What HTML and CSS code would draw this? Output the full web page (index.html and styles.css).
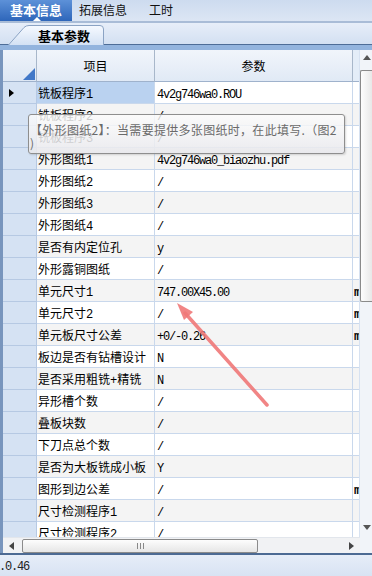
FILE: index.html
```html
<!DOCTYPE html>
<html lang="zh-CN">
<head>
    <meta charset="UTF-8">
    <title>基本信息</title>
    <link rel="stylesheet" href="styles.css">
</head>
<body>
<div class="app">
    <!--顶部页签-->
    <div class="tabbar">
        <div class="tab active">基本信息</div>
        <div class="tab">拓展信息</div>
        <div class="tab tab-last">工时</div>
    </div>
    <!--子页签-->
    <div class="subbar">
        <div class="subtab">
            <svg class="subtab-bg" width="96" height="22" viewBox="0 0 96 22">
                <defs>
                    <linearGradient id="tabfill" x1="0" y1="0" x2="0" y2="1">
                        <stop offset="0" stop-color="#f7faff"/>
                        <stop offset="1" stop-color="#d3e1f4"/>
                    </linearGradient>
                </defs>
                <path d="M0.5,22 L16,4.5 Q18,2.5 21,2.5 L92,2.5 Q95.5,2.5 95.5,6 L95.5,22" fill="url(#tabfill)" stroke="#8ba3c4"/>
            </svg>
            <span class="subtab-text">基本参数</span>
        </div>
    </div>
    <div class="band"></div>

    <!--表格-->
    <div class="gridbox">
        <div class="gridtop">
            <div class="viewport">
                <div class="row head">
                    <div class="rh corner"><span class="corner-mark"></span></div>
                    <div class="item">项目</div>
                    <div class="val">参数</div>
                    <div class="unit"></div>
                </div>
                <div class="row"><div class="rh"><span class="cur"></span></div><div class="item sel">铣板程序1</div><div class="val">4v2g746wa0.ROU</div><div class="unit"></div></div>
                <div class="row odd"><div class="rh"></div><div class="item">铣板程序2</div><div class="val">/</div><div class="unit"></div></div>
                <div class="row"><div class="rh"></div><div class="item">铣板程序3</div><div class="val">/</div><div class="unit"></div></div>
                <div class="row odd"><div class="rh"></div><div class="item">外形图纸1</div><div class="val">4v2g746wa0_biaozhu.pdf</div><div class="unit"></div></div>
                <div class="row"><div class="rh"></div><div class="item">外形图纸2</div><div class="val">/</div><div class="unit"></div></div>
                <div class="row odd"><div class="rh"></div><div class="item">外形图纸3</div><div class="val">/</div><div class="unit"></div></div>
                <div class="row"><div class="rh"></div><div class="item">外形图纸4</div><div class="val">/</div><div class="unit"></div></div>
                <div class="row odd"><div class="rh"></div><div class="item">是否有内定位孔</div><div class="val">y</div><div class="unit"></div></div>
                <div class="row"><div class="rh"></div><div class="item">外形露铜图纸</div><div class="val">/</div><div class="unit"></div></div>
                <div class="row odd"><div class="rh"></div><div class="item">单元尺寸1</div><div class="val">747.00X45.00</div><div class="unit">m</div></div>
                <div class="row"><div class="rh"></div><div class="item">单元尺寸2</div><div class="val">/</div><div class="unit">m</div></div>
                <div class="row odd"><div class="rh"></div><div class="item">单元板尺寸公差</div><div class="val">+0/-0.26</div><div class="unit">m</div></div>
                <div class="row"><div class="rh"></div><div class="item">板边是否有钻槽设计</div><div class="val">N</div><div class="unit"></div></div>
                <div class="row odd"><div class="rh"></div><div class="item">是否采用粗铣+精铣</div><div class="val">N</div><div class="unit"></div></div>
                <div class="row"><div class="rh"></div><div class="item">异形槽个数</div><div class="val">/</div><div class="unit"></div></div>
                <div class="row odd"><div class="rh"></div><div class="item">叠板块数</div><div class="val">/</div><div class="unit"></div></div>
                <div class="row"><div class="rh"></div><div class="item">下刀点总个数</div><div class="val">/</div><div class="unit"></div></div>
                <div class="row odd"><div class="rh"></div><div class="item">是否为大板铣成小板</div><div class="val">Y</div><div class="unit"></div></div>
                <div class="row"><div class="rh"></div><div class="item">图形到边公差</div><div class="val">/</div><div class="unit">m</div></div>
                <div class="row odd"><div class="rh"></div><div class="item">尺寸检测程序1</div><div class="val">/</div><div class="unit"></div></div>
                <div class="row"><div class="rh"></div><div class="item">尺寸检测程序2</div><div class="val">/</div><div class="unit"></div></div>
            </div>
            <!--竖向滚动条-->
            <div class="vscroll">
                <div class="arrow-up"></div>
                <div class="vthumb"></div>
                <div class="vspace"></div>
                <div class="arrow-down"></div>
            </div>
        </div>
        <!--横向滚动条-->
        <div class="hbar">
            <div class="hscroll">
                <div class="hbtn"><span class="arrow-left"></span></div>
                <div class="hthumb"><span class="grip"></span></div>
                <div class="hspace"></div>
                <div class="hbtn"><span class="arrow-right"></span></div>
            </div>
            <div class="hcorner"></div>
        </div>
    </div>

    <div class="status"><span class="ver">1.0.46</span></div>

    <!--提示框-->
    <div class="tooltip">【外形图纸2】：当需要提供多张图纸时，在此填写.（图2<br>)</div>

    <!--标注箭头-->
    <svg class="mark-arrow" width="372" height="576" viewBox="0 0 372 576">
        <line x1="267" y1="405" x2="185" y2="313" stroke="#f07878" stroke-width="3.5" stroke-linecap="round" opacity="0.9"/>
        <polygon points="177,303 193,312 184,320" fill="#f07878" opacity="0.9"/>
    </svg>
</div>
</body>
</html>
```

FILE: styles.css
```css
body{
    margin: 0;
    overflow: hidden;
    font-family: "Noto Sans CJK SC", "Liberation Sans", sans-serif;
    font-size: 12px;
    color: #000;
}
.app{
    position: relative;
    width: 372px;
    height: 576px;
    overflow: hidden;
    background: #dfe8f5;
}
/*顶部页签*/
.tabbar{
    display: flex;
    height: 21px;
    border-bottom: 2px solid #a9bcd7;
    background: linear-gradient(#cddbef, #dce6f4);
}
.tab{
    position: relative;
    padding: 0 7px;
    line-height: 20px;
    font-size: 12px;
    color: #111;
}
.tab.active{
    width: 72px;
    box-sizing: border-box;
    padding: 0;
    text-align: center;
    font-size: 13px;
    font-weight: bold;
    color: #fff;
    background: linear-gradient(#5d91d8, #2e66ba);
}
.tab.active::after{
    content: "";
    position: absolute;
    left: 33px;
    bottom: 0;
    border-left: 4px solid transparent;
    border-right: 4px solid transparent;
    border-bottom: 4px solid #fff;
}
.tab-last{
    margin-left: 8px;
}
/*子页签*/
.subbar{
    display: flex;
    align-items: flex-end;
    height: 21px;
    padding-left: 8px;
    border-bottom: 1px solid #4e6d97;
    background: linear-gradient(#e7eef9, #d3e0f2);
}
.subtab{
    position: relative;
    width: 96px;
    height: 22px;
    margin-bottom: -1px;
}
.subtab-bg{
    position: absolute;
    left: 0;
    top: 0;
}
.subtab-text{
    position: relative;
    display: block;
    padding: 4px 0 0 30px;
    line-height: 17px;
    font-size: 13px;
    font-weight: bold;
}
.band{
    height: 5px;
    background: #93b4de;
}
/*表格*/
.gridbox{
    border-left: 3px solid #7895bd;
    background: #fff;
}
.gridtop{
    display: flex;
    height: 487px;
}
.viewport{
    width: 357px;
    overflow: hidden;
}
.row{
    display: flex;
    height: 22px;
    background: #fff;
}
.row.odd{
    background: #f4f4f4;
}
.row > div{
    box-sizing: border-box;
    flex: none;
    height: 100%;
    border-right: 1px solid #c9d8ec;
    border-bottom: 1px solid #c9d8ec;
    white-space: nowrap;
    overflow: hidden;
}
.rh{
    width: 34px;
    background: #d5e2f3;
    display: flex;
    align-items: center;
}
.row > .rh{
    border-bottom-color: #b6c9e3;
    border-right-color: #b6c9e3;
}
.item{
    width: 118px;
    padding: 3px 0 0 1px;
    line-height: 20px;
    font-family: "Liberation Mono", "Noto Sans CJK SC", monospace;
}
.item.sel{
    background: #bad2f0;
}
.val{
    width: 198px;
    padding: 3px 0 0 2px;
    line-height: 20px;
    font-family: "Liberation Mono", monospace;
    letter-spacing: -1.2px;
}
.unit{
    width: 7px;
    padding: 3px 0 0 1px;
    line-height: 20px;
    font-family: "Liberation Mono", monospace;
    font-weight: bold;
    letter-spacing: -1.2px;
}
.row > .unit{
    border-right: none;
}
.cur{
    margin-left: 6px;
    border-left: 5px solid #000;
    border-top: 4px solid transparent;
    border-bottom: 4px solid transparent;
}
.row.head{
    height: 32px;
    background: linear-gradient(#f1f5fb, #e0e9f5);
}
.row.head > div{
    border-right-color: #a8b7ca;
    border-bottom-color: #9fb2cc;
    padding: 0;
    text-align: center;
    line-height: 31px;
    font-family: "Noto Sans CJK SC", sans-serif;
    letter-spacing: 0;
}
.row.head > .corner{
    background: linear-gradient(#eef3fa, #dde7f4);
    justify-content: flex-end;
    align-items: flex-end;
    padding: 0 1px 1px 0;
}
.row.head > .unit{
    background: #e4edf8;
}
.corner-mark{
    width: 0;
    height: 0;
    border-left: 12px solid transparent;
    border-bottom: 12px solid #4178c8;
}
/*竖向滚动条*/
.vscroll{
    display: flex;
    flex-direction: column;
    width: 12px;
    border-left: 1px solid #d7e2f1;
    background: #f1f4f9;
}
.arrow-up{
    margin: 5px 0 0 3px;
    border-left: 4px solid transparent;
    border-right: 4px solid transparent;
    border-bottom: 5px solid #555;
    width: 0;
}
.vthumb{
    height: 230px;
    margin-top: 10px;
    border: 1px solid #8a8a8a;
    border-right: none;
    border-radius: 2px 0 0 2px;
    background: linear-gradient(90deg, #fdfdfd, #e8e8e8);
}
.vspace{
    flex: 1;
}
.arrow-down{
    margin: 0 0 7px 3px;
    border-left: 4px solid transparent;
    border-right: 4px solid transparent;
    border-top: 5px solid #555;
    width: 0;
}
/*横向滚动条*/
.hbar{
    display: flex;
    height: 16px;
}
.hscroll{
    display: flex;
    align-items: center;
    width: 357px;
    background: #f1f2f4;
    border-top: 1px solid #e2e6ec;
    box-sizing: border-box;
}
.hbtn{
    width: 17px;
    display: flex;
    justify-content: center;
}
.arrow-left{
    border-top: 4px solid transparent;
    border-bottom: 4px solid transparent;
    border-right: 5px solid #444;
}
.arrow-right{
    border-top: 4px solid transparent;
    border-bottom: 4px solid transparent;
    border-left: 5px solid #444;
}
.hthumb{
    width: 236px;
    height: 14px;
    margin-left: 2px;
    box-sizing: border-box;
    border: 1px solid #8b8b8b;
    border-radius: 2px;
    background: linear-gradient(#fdfdfd, #e6e6e6);
    display: flex;
    justify-content: center;
    align-items: center;
}
.grip{
    width: 5px;
    height: 6px;
    border-left: 1px solid #888;
    border-right: 1px solid #888;
    background: linear-gradient(90deg, transparent 2px, #888 2px, #888 3px, transparent 3px);
}
.hspace{
    flex: 1;
}
.hcorner{
    flex: 1;
    background: #f1f4f9;
}
/*状态栏*/
.status{
    height: 21px;
    border-top: 2px solid #4c6a93;
    background: linear-gradient(#e6edf8, #d8e3f3);
}
.ver{
    display: block;
    margin-left: -7px;
    padding-top: 5px;
    line-height: 14px;
    font-family: "Liberation Mono", monospace;
    letter-spacing: -1.2px;
    color: #222;
}
/*提示框*/
.tooltip{
    position: absolute;
    left: 28px;
    top: 114px;
    width: 317px;
    height: 40px;
    box-sizing: border-box;
    padding: 8px 0 0 1px;
    border: 1px solid #8e8e8e;
    border-radius: 3px;
    background: linear-gradient(rgba(252,252,252,0.8), rgba(232,232,236,0.88));
    box-shadow: 1px 1px 2px rgba(0,0,0,0.15);
    line-height: 13px;
    font-size: 12px;
    letter-spacing: 0.3px;
    color: #6a6a6a;
    white-space: nowrap;
}
.mark-arrow{
    position: absolute;
    left: 0;
    top: 0;
    pointer-events: none;
}
```
